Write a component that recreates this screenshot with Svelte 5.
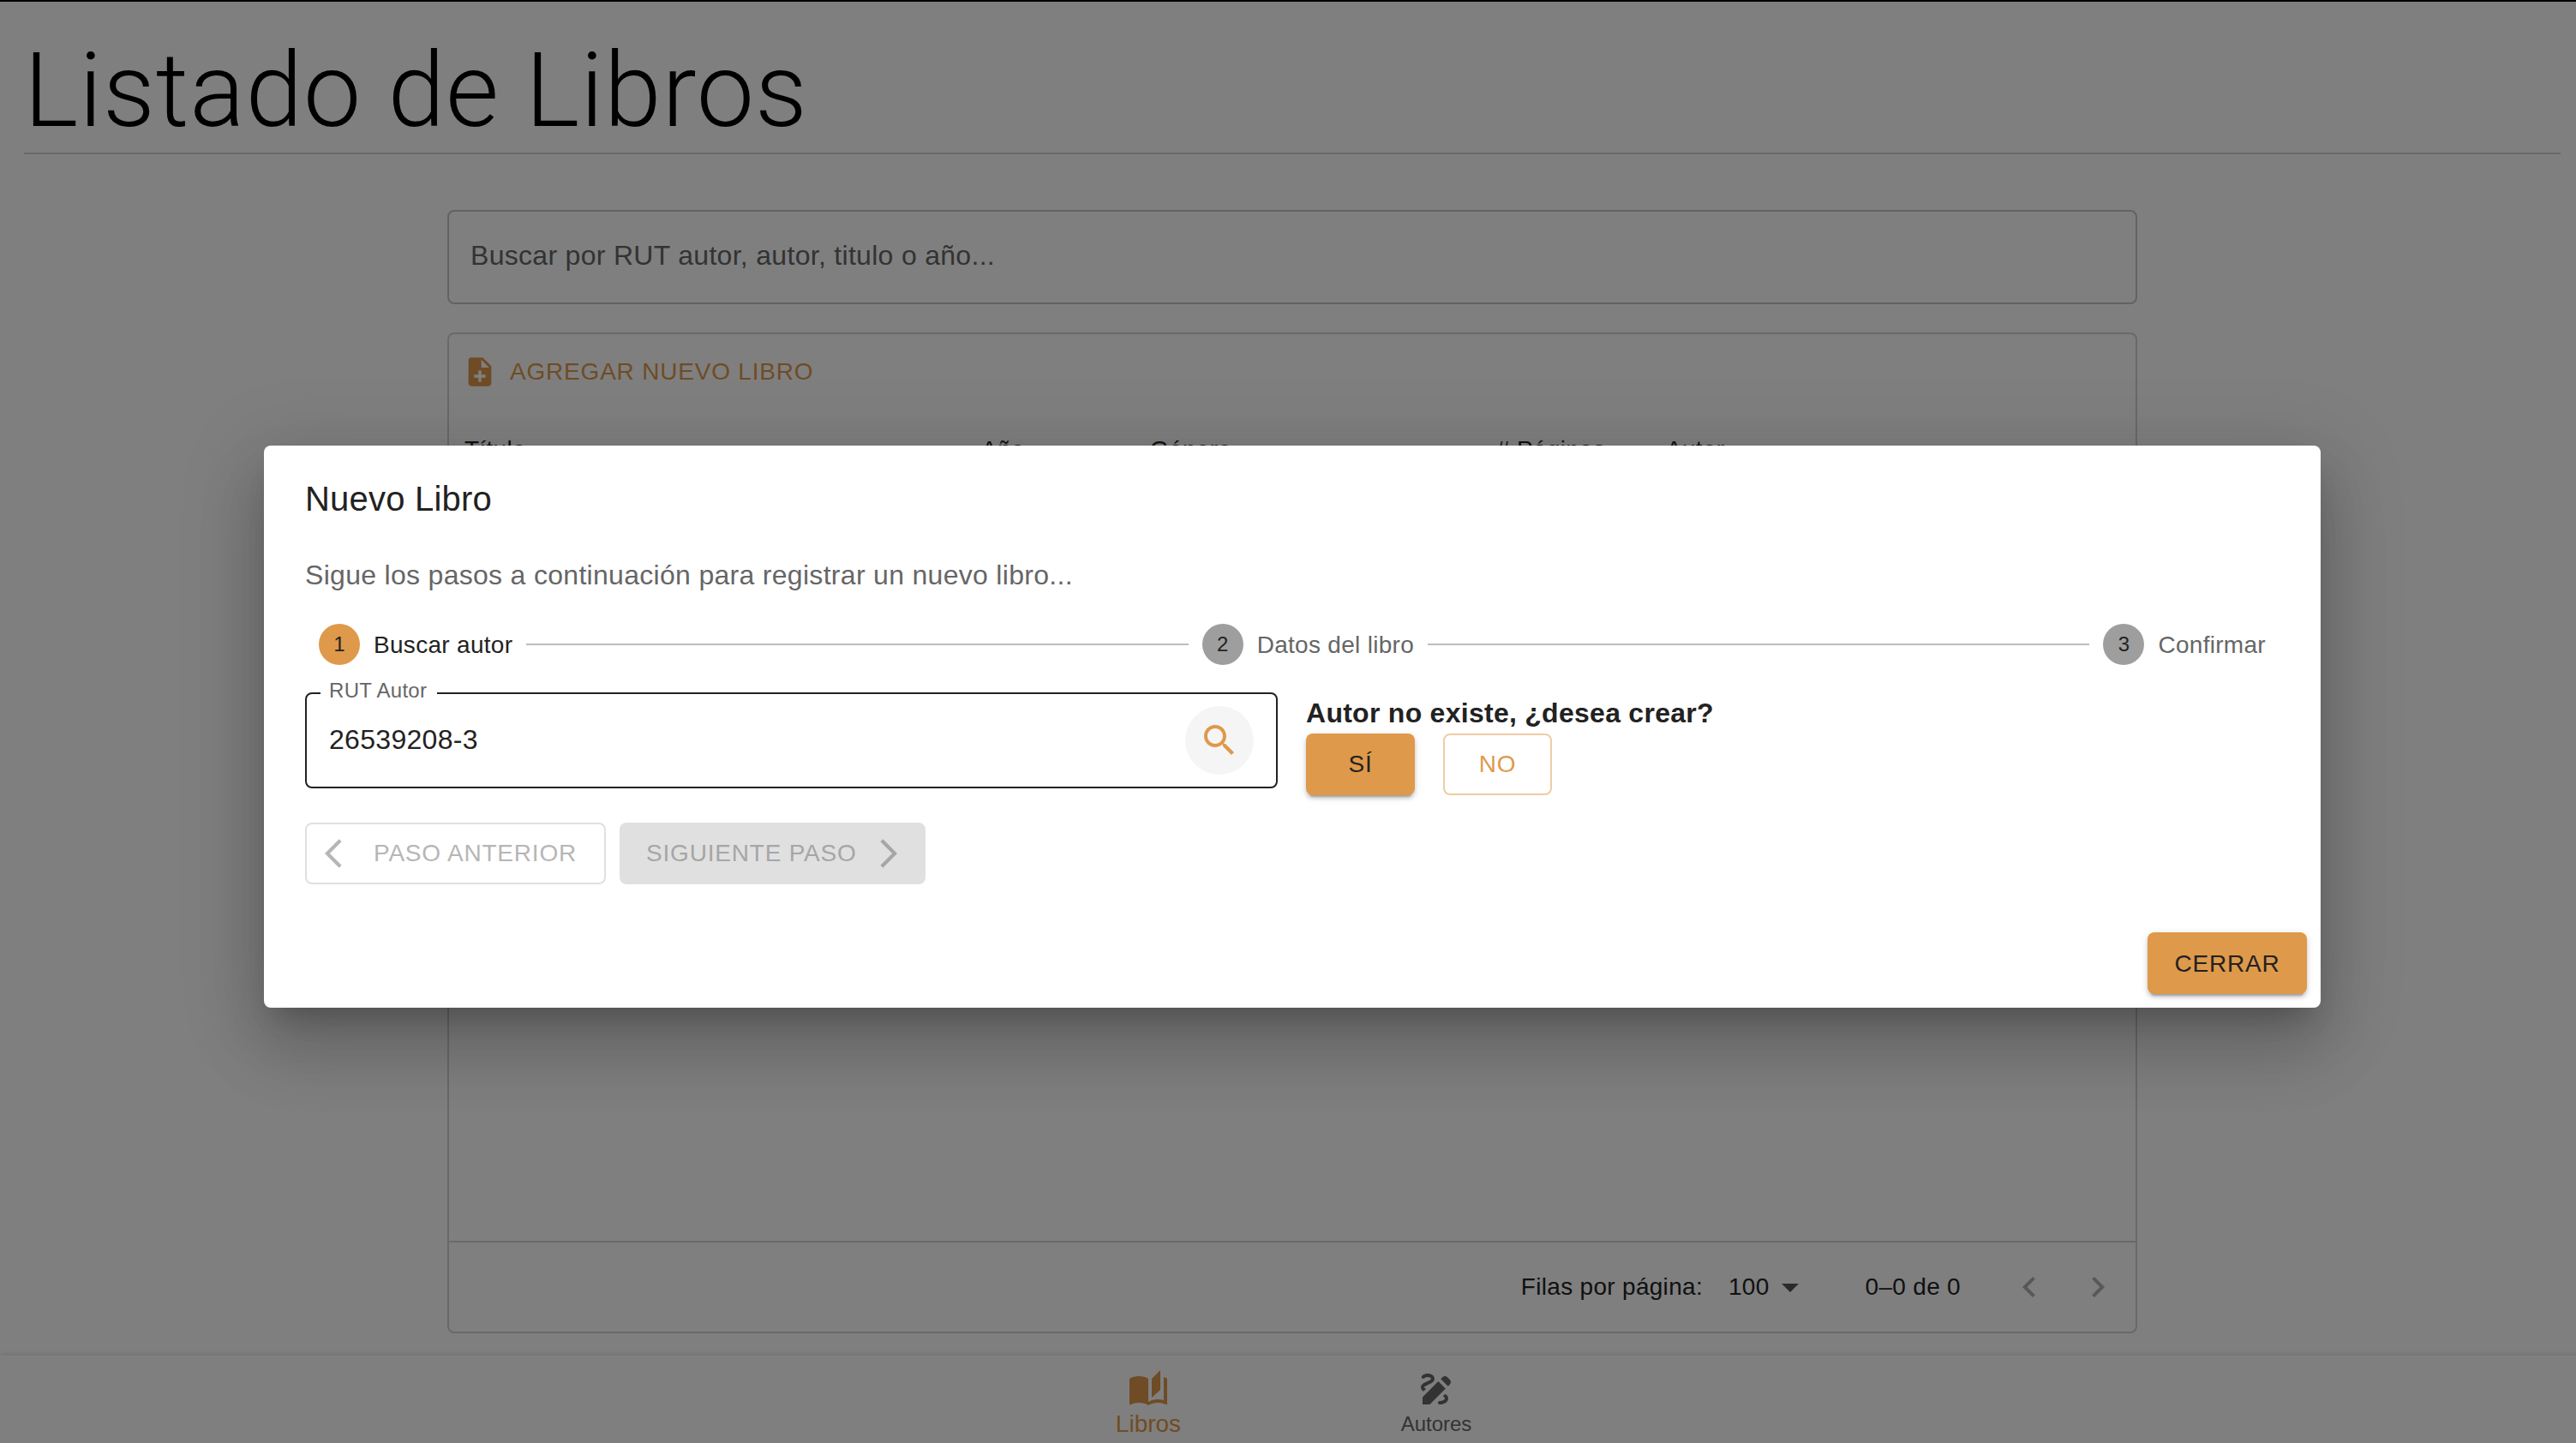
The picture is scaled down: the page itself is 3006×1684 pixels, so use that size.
<script>
	// Table columns and stepper data
	const columns = ['Título', 'Año', 'Género', '# Páginas', 'Autor'];
	const steps = [
		{ n: 1, label: 'Buscar autor', active: true },
		{ n: 2, label: 'Datos del libro', active: false },
		{ n: 3, label: 'Confirmar', active: false }
	];
	let rut = $state('26539208-3');
</script>

<div class="page">
	<h2 class="title">Listado de Libros</h2>

	<main class="content">
		<input class="search" type="text" placeholder="Buscar por RUT autor, autor, titulo o año..." />

		<section class="card">
			<button class="add-button">
				<svg viewBox="0 0 24 24" class="icon-40">
					<path d="M14 2H6c-1.1 0-1.99.9-1.99 2L4 20c0 1.1.89 2 1.99 2H18c1.1 0 2-.9 2-2V8l-6-6zm2 14h-3v3h-2v-3H8v-2h3v-3h2v3h3v2zm-3-7V3.5L18.5 9H13z" />
				</svg>
				AGREGAR NUEVO LIBRO
			</button>

			<div class="table-head">
				{#each columns as col}
					<span>{col}</span>
				{/each}
			</div>

			<div class="table-body"></div>

			<footer class="pagination">
				<span>Filas por página:</span>
				<span class="rows-value">100</span>
				<svg viewBox="0 0 24 24" class="icon-48 caret"><path d="M7 10l5 5 5-5z" /></svg>
				<span class="range">0–0 de 0</span>
				<svg viewBox="0 0 24 24" class="icon-48 page-arrow first">
					<path d="M15.41 16.59 10.83 12l4.58-4.59L14 6l-6 6 6 6 1.41-1.41z" />
				</svg>
				<svg viewBox="0 0 24 24" class="icon-48 page-arrow">
					<path d="M8.59 16.59 13.17 12 8.59 7.41 10 6l6 6-6 6-1.41-1.41z" />
				</svg>
			</footer>
		</section>
	</main>

	<nav class="bottom-nav">
		<div class="nav-item active">
			<svg viewBox="0 0 24 24" class="icon-48">
				<path d="M19 1l-5 5v11l5-4.5V1zM1 6v14.65c0 .25.25.5.5.5.1 0 .15-.05.25-.05C3.1 20.45 5.05 20 6.5 20c1.95 0 4.05.4 5.5 1.5V6c-1.45-1.1-3.55-1.5-5.5-1.5S2.45 4.9 1 6zm22 13.5V6c-.6-.45-1.25-.75-2-1v13.5c-1.1-.35-2.3-.5-3.5-.5-1.7 0-4.15.65-5.5 1.5v2c1.35-.85 3.8-1.5 5.5-1.5 1.65 0 3.35.3 4.75 1.05.1.05.15.05.25.05.25 0 .5-.25.5-.5v-1.1z" />
			</svg>
			<span>Libros</span>
		</div>
		<div class="nav-item">
			<svg viewBox="0 0 24 24" class="icon-48">
				<path d="M18.85 10.39l1.06-1.06c.78-.78.78-2.05 0-2.83L18.5 5.09c-.78-.78-2.05-.78-2.83 0l-1.06 1.06 4.24 4.24zm-5.66-2.83L4 16.76V21h4.24l9.19-9.19-4.24-4.25zM19 17.5c0 2.19-2.54 3.5-5 3.5-.55 0-1-.45-1-1s.45-1 1-1c1.54 0 3-.73 3-1.5 0-.47-.48-.87-1.23-1.2l1.48-1.48c1.07.63 1.75 1.47 1.75 2.68zM4.58 13.35C3.61 12.79 3 12.06 3 11c0-1.8 1.89-2.63 3.56-3.36C7.59 7.18 9 6.56 9 6c0-.41-.78-1-2-1-1.26 0-1.8.61-1.83.64-.35.41-.98.46-1.4.12-.41-.34-.49-.95-.15-1.38C3.73 4.24 4.76 3 7 3s4 1.32 4 3c0 1.87-1.93 2.72-3.64 3.47C6.42 9.88 5 10.5 5 11c0 .31.43.6 1.07.86l-1.49 1.49z" />
			</svg>
			<span>Autores</span>
		</div>
	</nav>

	<div class="backdrop">
		<div class="dialog" role="dialog">
			<h3 class="dialog-title">Nuevo Libro</h3>
			<p class="dialog-text">Sigue los pasos a continuación para registrar un nuevo libro...</p>

			<div class="stepper">
				{#each steps as step, i}
					{#if i > 0}
						<div class="connector"></div>
					{/if}
					<div class="step" class:active={step.active}>
						<span class="step-circle">{step.n}</span>
						<span class="step-label">{step.label}</span>
					</div>
				{/each}
			</div>

			<div class="author-row">
				<div class="field">
					<span class="field-label">RUT Autor</span>
					<input class="field-input" type="text" bind:value={rut} />
					<button class="search-button" aria-label="Buscar">
						<svg viewBox="0 0 24 24" class="icon-48">
							<path d="M15.5 14h-.79l-.28-.27C15.41 12.59 16 11.11 16 9.5 16 5.91 13.09 3 9.5 3S3 5.91 3 9.5 5.91 16 9.5 16c1.61 0 3.09-.59 4.23-1.57l.27.28v.79l5 4.99L20.49 19l-4.99-5zm-6 0C7.01 14 5 11.99 5 9.5S7.01 5 9.5 5 14 7.01 14 9.5 11.99 14 9.5 14z" />
						</svg>
					</button>
				</div>

				<div class="confirm">
					<div class="confirm-text">Autor no existe, ¿desea crear?</div>
					<div class="confirm-buttons">
						<button class="btn contained">SÍ</button>
						<button class="btn outlined">NO</button>
					</div>
				</div>
			</div>

			<div class="step-nav">
				<button class="btn nav-prev" disabled>
					<svg viewBox="0 0 24 24" class="icon-40"><path d="M17.77 3.77 16 2 6 12l10 10 1.77-1.77L9.54 12z" /></svg>
					PASO ANTERIOR
				</button>
				<button class="btn nav-next" disabled>
					SIGUIENTE PASO
					<svg viewBox="0 0 24 24" class="icon-40"><path d="M6.23 20.23 8 22l10-10L8 2 6.23 3.77 14.46 12z" /></svg>
				</button>
			</div>

			<div class="dialog-actions">
				<button class="btn contained close">CERRAR</button>
			</div>
		</div>
	</div>
</div>

<style>
	:global(body) {
		overflow: hidden;
		background: #fff;
	}

	.page {
		position: relative;
		display: flex;
		flex-direction: column;
		width: 3016px;
		height: 1696px;
		border-top: 2px solid #000;
		box-sizing: border-box;
		background: #fff;
		color: #222;
		font-family: 'Liberation Sans', Arial, sans-serif;
		overflow: hidden;
	}

	svg {
		display: block;
		flex: none;
		fill: currentColor;
	}

	.icon-40 {
		width: 40px;
		height: 40px;
	}

	.icon-48 {
		width: 48px;
		height: 48px;
	}

	button {
		font-family: inherit;
	}

	.title {
		margin: 0 28px;
		padding-top: 32px;
		height: 144px;
		box-sizing: content-box;
		border-bottom: 2px solid #d2d2d2;
		font-family: Roboto, sans-serif;
		font-size: 120px;
		font-weight: 300;
		line-height: 144px;
		letter-spacing: 0.9px;
		color: #000;
	}

	.content {
		flex: 1;
		display: flex;
		flex-direction: column;
		width: 1972px;
		margin: 65px auto 0;
		min-height: 0;
	}

	.search {
		height: 110px;
		box-sizing: border-box;
		padding: 0 25px 3px;
		border: 2px solid #c4c4c4;
		border-radius: 8px;
		background: #fff;
		font-family: inherit;
		font-size: 32px;
		letter-spacing: 0.3px;
		outline: none;
	}

	.search::placeholder {
		color: #666;
		opacity: 1;
	}

	.card {
		display: flex;
		flex-direction: column;
		height: 1168px;
		margin-top: 33px;
		box-sizing: border-box;
		border: 2px solid #d2d2d2;
		border-radius: 8px;
	}

	.add-button {
		display: flex;
		align-items: center;
		gap: 15px;
		align-self: flex-start;
		margin: 21px 0 0 16px;
		padding: 0;
		border: none;
		background: none;
		color: #df994a;
		font-size: 28px;
		line-height: 46px;
		letter-spacing: 0.8px;
	}

	.table-head {
		display: grid;
		grid-template-columns: 603px 197px 404px 198px 1fr;
		padding: 0 0 0 18px;
		margin-top: 46px;
		font-size: 28px;
		line-height: 44px;
		letter-spacing: 0.3px;
	}

	.table-body {
		flex: 1;
	}

	.pagination {
		display: flex;
		align-items: center;
		justify-content: flex-end;
		height: 104px;
		padding-right: 20px;
		border-top: 2px solid #d2d2d2;
		font-size: 28px;
		letter-spacing: 0.3px;
	}

	.rows-value {
		margin-left: 30px;
	}

	.caret {
		color: #555;
	}

	.range {
		margin-left: 64px;
	}

	.page-arrow {
		color: #b0b0b0;
		margin-left: 32px;
	}

	.page-arrow.first {
		margin-left: 56px;
	}

	.bottom-nav {
		display: flex;
		justify-content: center;
		height: 114px;
		background: #fff;
		box-shadow: 0 -2px 6px rgba(0, 0, 0, 0.1);
		flex: none;
	}

	.nav-item {
		display: flex;
		flex-direction: column;
		align-items: center;
		width: 336px;
		padding-top: 15px;
		box-sizing: border-box;
		color: #666;
		font-size: 24px;
		line-height: 28px;
	}

	.nav-item span {
		margin-top: 3px;
	}

	.nav-item.active {
		color: #df994a;
		font-size: 28px;
	}

	.backdrop {
		position: absolute;
		inset: -2px 0 0;
		display: flex;
		align-items: center;
		justify-content: center;
		background: rgba(0, 0, 0, 0.5);
	}

	.dialog {
		display: flex;
		flex-direction: column;
		width: 2400px;
		height: 656px;
		box-sizing: border-box;
		padding: 30px 16px 16px 48px;
		border-radius: 8px;
		background: #fff;
		box-shadow:
			0 22px 30px -14px rgba(0, 0, 0, 0.2),
			0 48px 76px 6px rgba(0, 0, 0, 0.14),
			0 18px 92px 16px rgba(0, 0, 0, 0.12);
	}

	.dialog-title {
		margin: 0;
		font-size: 40px;
		font-weight: 400;
		line-height: 64px;
		letter-spacing: 0.2px;
		color: #222;
	}

	.dialog-text {
		margin: 33px 0 0;
		font-size: 32px;
		line-height: 48px;
		letter-spacing: 0.3px;
		color: #666;
	}

	.stepper {
		display: flex;
		align-items: center;
		margin: 33px 32px 0 0;
	}

	.step {
		display: flex;
		align-items: center;
		gap: 16px;
		padding: 0 16px;
		color: #666;
		font-size: 28px;
		letter-spacing: 0.3px;
	}

	.step-label {
		padding-top: 2px;
	}

	.step-circle {
		display: flex;
		align-items: center;
		justify-content: center;
		width: 48px;
		height: 48px;
		border-radius: 50%;
		background: #9e9e9e;
		color: #222;
		font-size: 24px;
		letter-spacing: 0;
	}

	.step.active {
		color: #222;
	}

	.step.active .step-circle {
		background: #df994a;
	}

	.connector {
		flex: 1;
		height: 2px;
		background: #bdbdbd;
	}

	.author-row {
		display: flex;
		margin-top: 32px;
		gap: 33px;
	}

	.field {
		position: relative;
		display: flex;
		align-items: center;
		width: 1135px;
		height: 112px;
		box-sizing: border-box;
		padding: 0 26px 0 26px;
		border: 2px solid #222;
		border-radius: 8px;
	}

	.field-label {
		position: absolute;
		left: 16px;
		top: -18px;
		padding: 0 12px 0 10px;
		background: #fff;
		color: #666;
		font-size: 24px;
		line-height: 28px;
		letter-spacing: 0.3px;
	}

	.field-input {
		flex: 1;
		min-width: 0;
		border: none;
		outline: none;
		padding: 0 0 2px;
		background: none;
		font-family: inherit;
		font-size: 32px;
		letter-spacing: 0.3px;
		color: #222;
	}

	.search-button {
		display: flex;
		align-items: center;
		justify-content: center;
		width: 80px;
		height: 80px;
		padding: 0;
		border: none;
		border-radius: 50%;
		background: #f5f5f5;
		color: #df994a;
	}

	.confirm-text {
		margin-top: 6px;
		font-size: 32px;
		font-weight: 700;
		line-height: 37px;
		letter-spacing: 0.27px;
		color: #222;
	}

	.confirm-buttons {
		display: flex;
		gap: 33px;
		margin-top: 5px;
	}

	.btn {
		display: inline-flex;
		align-items: center;
		justify-content: center;
		height: 72px;
		box-sizing: border-box;
		padding: 0;
		border-radius: 8px;
		font-size: 28px;
		letter-spacing: 0.8px;
	}

	.contained {
		border: none;
		background: #df994a;
		color: #222;
		box-shadow:
			0 6px 2px -4px rgba(0, 0, 0, 0.2),
			0 4px 4px 0 rgba(0, 0, 0, 0.14),
			0 2px 10px 0 rgba(0, 0, 0, 0.12);
	}

	.confirm-buttons .btn {
		width: 127px;
	}

	.outlined {
		border: 2px solid #efcca4;
		background: #fff;
		color: #df994a;
	}

	.step-nav {
		display: flex;
		gap: 16px;
		margin-top: 32px;
	}

	.nav-prev,
	.nav-next {
		justify-content: flex-start;
		color: #b6b6b6;
	}

	.nav-prev {
		width: 351px;
		gap: 27px;
		padding-left: 11px;
		border: 2px solid #e0e0e0;
		background: #fff;
	}

	.nav-next {
		width: 357px;
		gap: 17px;
		padding-left: 31px;
		border: none;
		background: #e0e0e0;
		color: #a6a6a6;
	}

	.dialog-actions {
		display: flex;
		justify-content: flex-end;
		margin-top: auto;
	}

	.close {
		width: 186px;
		padding-top: 1px;
	}
</style>
